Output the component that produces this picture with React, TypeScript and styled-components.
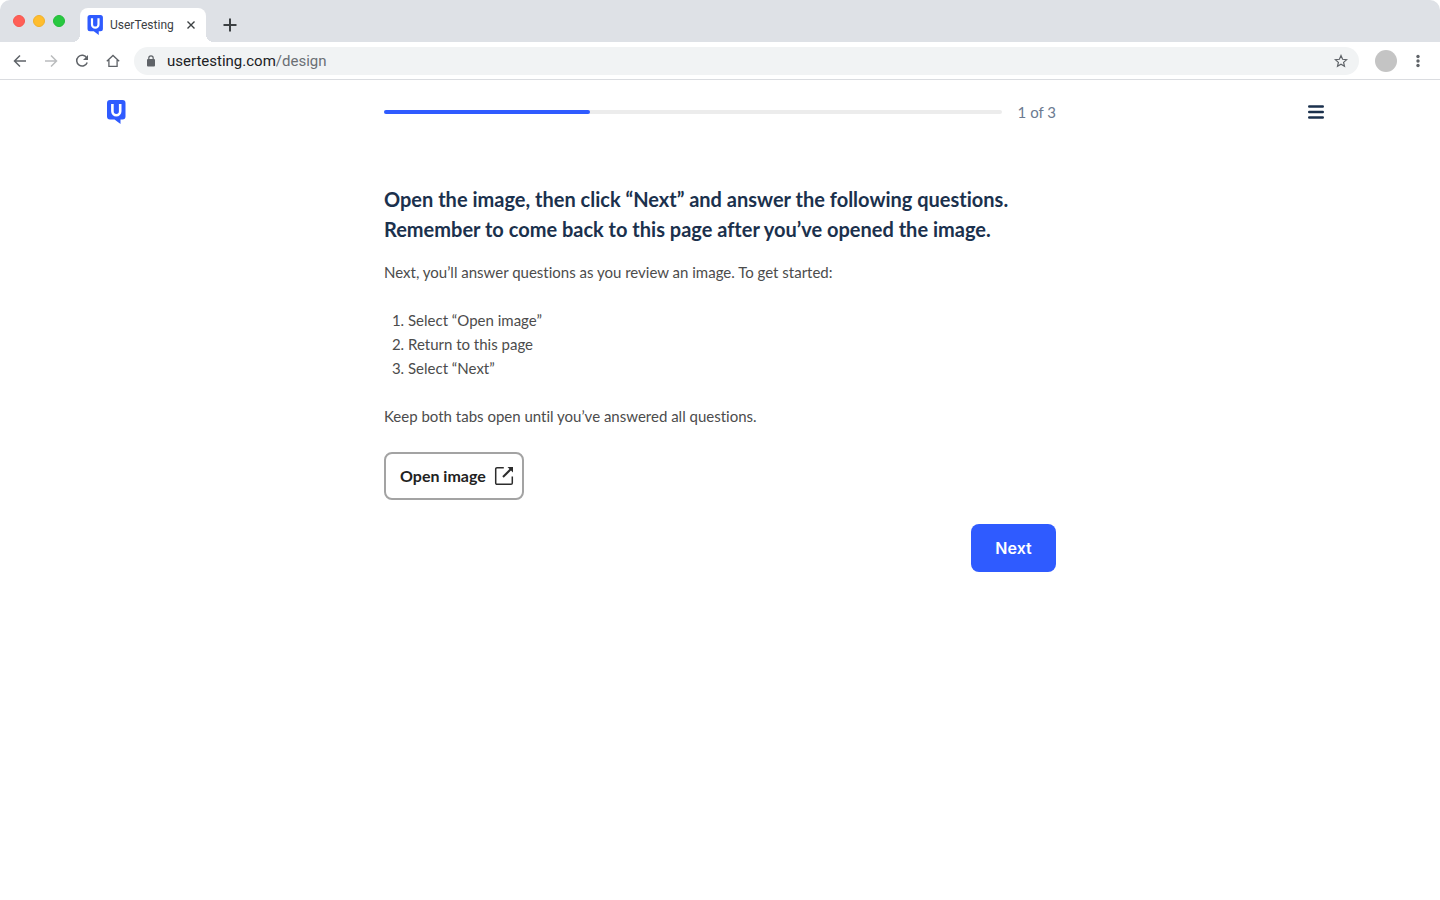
import React from 'react';
import styled, { createGlobalStyle } from 'styled-components';

const GlobalStyle = createGlobalStyle`
  *, *::before, *::after { box-sizing: border-box; }
  body {
    margin: 0;
    background: #fff;
    font-family: Lato, "Open Sans", sans-serif;
    font-size: 15px;
    font-variant-ligatures: none;
    line-height: 24px;
    color: #4c4c4c;
  }
  button, input { font: inherit; color: inherit; }
  svg { display: block; flex: none; }
`;

const TabStrip = styled.div`
  display: flex;
  align-items: flex-end;
  height: 42px;
  padding-left: 13px;
  background: #dee1e6;
  border-radius: 10px 10px 0 0;
  font-family: Roboto, sans-serif;
`;

const WindowControls = styled.div`
  display: flex;
  gap: 8px;
  align-self: center;
  margin-right: 15px;
`;

const WindowButton = styled.button<{ $fill: string; $edge: string }>`
  width: 12px;
  height: 12px;
  padding: 0;
  border: 1px solid ${(p) => p.$edge};
  border-radius: 50%;
  background: ${(p) => p.$fill};
`;

const Tab = styled.div`
  position: relative;
  display: flex;
  align-items: center;
  gap: 5px;
  height: 34px;
  padding: 0 7px 0 5px;
  border-radius: 8px 8px 0 0;
  background: #fff;
  color: #3c4043;
  font-size: 12px;
  line-height: 16px;

  &::before, &::after {
    content: "";
    position: absolute;
    bottom: 0;
    width: 8px;
    height: 8px;
  }
  &::before {
    left: -8px;
    background: radial-gradient(circle at 0 0, transparent 8px, #fff 8px);
  }
  &::after {
    right: -8px;
    background: radial-gradient(circle at 100% 0, transparent 8px, #fff 8px);
  }
`;

const TabTitle = styled.span`
  min-width: 68px;
`;

const IconButton = styled.button<{ $size: number }>`
  display: flex;
  align-items: center;
  justify-content: center;
  flex: none;
  width: ${(p) => p.$size}px;
  height: ${(p) => p.$size}px;
  padding: 0;
  border: 0;
  background: none;
  cursor: pointer;
`;

const NewTab = styled(IconButton)`
  margin: 0 0 4px 11px;
`;

const Toolbar = styled.div`
  display: flex;
  align-items: center;
  height: 38px;
  padding: 0 10px 0 8px;
  border-bottom: 1px solid #dadce0;
  font-family: Roboto, sans-serif;
`;

const NavButtons = styled.nav`
  display: flex;
  gap: 7px;
  margin-right: 9px;
`;

const AddressBar = styled.form`
  display: flex;
  align-items: center;
  flex: 1;
  height: 28px;
  padding: 0 10px;
  border-radius: 14px;
  background: #f1f3f4;
`;

const Domain = styled.label`
  margin-left: 9px;
  color: #202124;
`;

const PathInput = styled.input`
  flex: 1;
  min-width: 0;
  padding: 0;
  border: 0;
  outline: 0;
  background: none;
  color: #6b6f74;
`;

const Avatar = styled.button`
  width: 22px;
  height: 22px;
  margin: 0 9px 0 16px;
  padding: 0;
  border: 0;
  border-radius: 50%;
  background: #c4c4c4;
`;

const PageHeader = styled.header`
  display: grid;
  grid-template-columns: 1fr minmax(0, 672px) 1fr;
  align-items: center;
  height: 64px;
  padding: 0 104px;
`;

const LogoLink = styled.a`
  justify-self: start;
`;

const MenuButton = styled(IconButton)`
  justify-self: end;
`;

const Progress = styled.div`
  display: flex;
  align-items: center;
  gap: 16px;
  color: #6b7a90;
`;

const Track = styled.div`
  flex: 1;
  height: 4px;
  border-radius: 2px;
  background: #ececec;
`;

const Fill = styled.div`
  height: 4px;
  border-radius: 2px;
  background: #2f5bff;
`;

const Main = styled.main`
  display: flex;
  flex-direction: column;
  max-width: 672px;
  margin: 40px auto;
`;

const Title = styled.h1`
  margin: 0 0 16px;
  color: #1b314d;
  font-size: 20px;
  font-weight: 700;
  line-height: 30px;
`;

const Copy = styled.p`
  margin: 0 0 24px;
`;

const Steps = styled.ol`
  margin: 0 0 24px;
  padding-left: 24px;
`;

const OpenButton = styled.button`
  display: flex;
  align-items: center;
  justify-content: space-between;
  align-self: flex-start;
  min-width: 140px;
  height: 48px;
  padding: 0 8px 0 14px;
  border: 2px solid #a3a3a3;
  border-radius: 8px;
  background: #fff;
  color: #222;
  font-size: 16px;
  font-weight: 700;
  cursor: pointer;
`;

const NextButton = styled.button`
  align-self: flex-end;
  min-width: 85px;
  height: 48px;
  margin-top: 24px;
  padding: 0 24px;
  border: 0;
  border-radius: 8px;
  background: #2f5bff;
  color: #fff;
  font-family: Inter, sans-serif;
  font-size: 16px;
  font-weight: 600;
  cursor: pointer;
`;

const Logo = ({ size }: { size: number }) => (
  <svg width={size} height={size} viewBox="0 0 24 24" aria-hidden="true">
    <path
      d="M6 0h12.500a3 3 0 0 1 3 3v13.500a3 3 0 0 1-3 3H16.500V24l-6-4.500H6a3 3 0 0 1-3-3V3a3 3 0 0 1 3-3z"
      fill="#2f5bff"
    />
    <path d="M8.400 4v7.300a3.900 3.900 0 0 0 7.800 0V4" fill="none" stroke="#fff" strokeWidth="2.600" />
  </svg>
);

const line = { fill: 'none', stroke: '#5f6368', strokeWidth: 1.5 };

export default function App() {
  const step = 1;
  const total = 3;
  return (
    <>
      <GlobalStyle />
      <TabStrip>
        <WindowControls>
          <WindowButton $fill="#ff5f57" $edge="#f6564e" aria-label="Close window" />
          <WindowButton $fill="#ffbd2e" $edge="#f0b02a" aria-label="Minimize window" />
          <WindowButton $fill="#28c840" $edge="#22bc39" aria-label="Zoom window" />
        </WindowControls>
        <Tab>
          <Logo size={20} />
          <TabTitle>UserTesting</TabTitle>
          <IconButton $size={16} aria-label="Close tab">
            <svg width="16" height="16" viewBox="0 0 16 16">
              <path d="M4.500 4.500l7 7m0-7l-7 7" fill="none" stroke="#3c4043" strokeWidth="1.400" />
            </svg>
          </IconButton>
        </Tab>
        <NewTab $size={26} aria-label="New tab">
          <svg width="16" height="16" viewBox="0 0 16 16">
            <path d="M8 1.500v13M1.500 8h13" fill="none" stroke="#3c4043" strokeWidth="2" />
          </svg>
        </NewTab>
      </TabStrip>
      <Toolbar>
        <NavButtons aria-label="Browser">
          <IconButton $size={24} aria-label="Back">
            <svg width="16" height="16" viewBox="0 0 16 16">
              <path d="M14 8H3M8 2.500L2.500 8 8 13.500" {...line} />
            </svg>
          </IconButton>
          <IconButton $size={24} aria-label="Forward">
            <svg width="16" height="16" viewBox="0 0 16 16">
              <path d="M2 8h11M8 2.500L13.500 8 8 13.500" {...line} stroke="#babcbe" />
            </svg>
          </IconButton>
          <IconButton $size={24} aria-label="Reload">
            <svg width="16" height="16" viewBox="0 0 16 16">
              <path d="M12.800 5A5.400 5.400 0 1 0 13.200 9.500" {...line} />
              <path d="M14 2v5H9z" fill="#5f6368" />
            </svg>
          </IconButton>
          <IconButton $size={24} aria-label="Home">
            <svg width="16" height="16" viewBox="0 0 16 16">
              <path d="M1.800 8.300L8 2.500l6.200 5.800M3.900 7v6.400h8.200V7" {...line} strokeWidth="1.300" />
            </svg>
          </IconButton>
        </NavButtons>
        <AddressBar onSubmit={(e) => e.preventDefault()}>
          <svg width="14" height="14" viewBox="0 0 14 14" aria-hidden="true">
            <rect x="3" y="5" width="8" height="7.500" rx="1" fill="#5f6368" />
            <path d="M4.800 5.500V4a2.200 2.200 0 0 1 4.400 0v1.500" fill="none" stroke="#5f6368" strokeWidth="1.200" />
          </svg>
          <Domain htmlFor="path">usertesting.com</Domain>
          <PathInput id="path" defaultValue="/design" />
          <IconButton $size={16} type="button" aria-label="Bookmark this page">
            <svg width="16" height="16" viewBox="0 0 16 16">
              <path
                d="M8 2.600l1.600 3.700 4 .4-3 2.700.9 3.900L8 11.200l-3.500 2.100.9-3.900-3-2.700 4-.4z"
                {...line}
                strokeWidth="1.200"
              />
            </svg>
          </IconButton>
        </AddressBar>
        <Avatar aria-label="Profile" />
        <IconButton $size={24} aria-label="Browser menu">
          <svg width="16" height="16" viewBox="0 0 16 16" fill="#5f6368">
            <circle cx="8" cy="3.500" r="1.700" />
            <circle cx="8" cy="8" r="1.700" />
            <circle cx="8" cy="12.500" r="1.700" />
          </svg>
        </IconButton>
      </Toolbar>

      <PageHeader>
        <LogoLink href="#" aria-label="UserTesting">
          <Logo size={24} />
        </LogoLink>
        <Progress>
          <Track role="progressbar" aria-label="Progress" aria-valuenow={step} aria-valuemax={total}>
            <Fill style={{ width: `${(step / total) * 100}%` }} />
          </Track>
          <span>{step} of {total}</span>
        </Progress>
        <MenuButton $size={40} aria-label="Menu">
          <svg width="16" height="16" viewBox="0 0 16 16">
            <path d="M1.200 2.500h13.600M1.200 8h13.600M1.200 13.500h13.600" stroke="#1b314d" strokeWidth="2.400" strokeLinecap="round" />
          </svg>
        </MenuButton>
      </PageHeader>

      <Main>
        <Title>
          Open the image, then click “Next” and answer the following questions. Remember to come
          back to this page after you’ve opened the image.
        </Title>
        <Copy>Next, you’ll answer questions as you review an image. To get started:</Copy>
        <Steps>
          <li>Select “Open image”</li>
          <li>Return to this page</li>
          <li>Select “Next”</li>
        </Steps>
        <Copy>Keep both tabs open until you’ve answered all questions.</Copy>
        <OpenButton>
          Open image
          <svg width="20" height="20" viewBox="0 0 20 20" aria-hidden="true">
            <path
              d="M9.800 1.700H3A1.300 1.300 0 0 0 1.700 3v14A1.300 1.300 0 0 0 3 18.300h14a1.300 1.300 0 0 0 1.300-1.300v-6.500"
              fill="none"
              stroke="#2c2c2c"
              strokeWidth="1.500"
            />
            <path d="M9 11L17 3" stroke="#2c2c2c" strokeWidth="2" />
            <path d="M13.500 1H19v5.500z" fill="#2c2c2c" />
          </svg>
        </OpenButton>
        <NextButton>Next</NextButton>
      </Main>
    </>
  );
}
